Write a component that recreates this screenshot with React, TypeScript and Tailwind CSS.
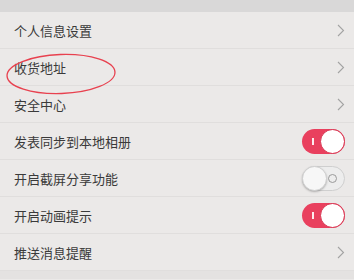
import { ReactNode } from "react";

const Chevron = () => (
  <svg width="8" height="13" viewBox="0 0 8 13" fill="none">
    <path d="M1 1l5.5 5.5L1 12" stroke="#a3a3a3" strokeWidth="1.1" />
  </svg>
);

const Toggle = ({ on }: { on: boolean }) =>
  on ? (
    <div className="relative h-[25px] w-[43px] rounded-full bg-[#e9405e]">
      <div className="absolute left-[10px] top-[9px] h-[7px] w-[1.5px] bg-white/90" />
      <div className="absolute right-0 top-0 h-[25px] w-[25px] rounded-full border border-[#d8334f] bg-white" />
    </div>
  ) : (
    <div className="relative h-[25px] w-[43px] rounded-full border border-[#cfcfcf] bg-[#ededed]">
      <div className="absolute right-[7px] top-[7px] h-[9px] w-[9px] rounded-full border border-[#9a9a9a]" />
      <div className="absolute -left-px -top-px h-[25px] w-[25px] rounded-full border border-[#d0d0d0] bg-[#f7f7f7] shadow-[0_1px_2px_rgba(0,0,0,0.25)]" />
    </div>
  );

const rows: { label: string; right: ReactNode }[] = [
  { label: "个人信息设置", right: <Chevron /> },
  { label: "收货地址", right: <Chevron /> },
  { label: "安全中心", right: <Chevron /> },
  { label: "发表同步到本地相册", right: <Toggle on /> },
  { label: "开启截屏分享功能", right: <Toggle on={false} /> },
  { label: "开启动画提示", right: <Toggle on /> },
  { label: "推送消息提醒", right: <Chevron /> },
];

export default function App() {
  return (
    <div
      className="relative h-[280px] w-[354px] overflow-hidden bg-[#ebe9e8] text-[#3a3a3a]"
      style={{ fontFamily: '"Noto Sans CJK SC", "Noto Sans", sans-serif' }}
    >
      <div className="h-[12px] bg-[#d9d8d8]" />
      {rows.map((r) => (
        <div
          key={r.label}
          className="flex h-[37px] items-center justify-between border-b border-[#e0dedd] pl-[14px] pr-[9px]"
        >
          <span className="text-[13px] leading-none">{r.label}</span>
          <div className="flex items-center">{r.right}</div>
        </div>
      ))}
      <div className="h-[8px] bg-[#e4e2e1]" />
      {/* hand-drawn red ellipse annotation */}
      <svg className="absolute left-[5px] top-[53px]" width="114" height="44" viewBox="0 0 114 44">
        <ellipse cx="56" cy="21" rx="54" ry="19.5" fill="none" stroke="#e8414f" strokeWidth="1.3" transform="rotate(-2 56 21)" />
      </svg>
    </div>
  );
}
